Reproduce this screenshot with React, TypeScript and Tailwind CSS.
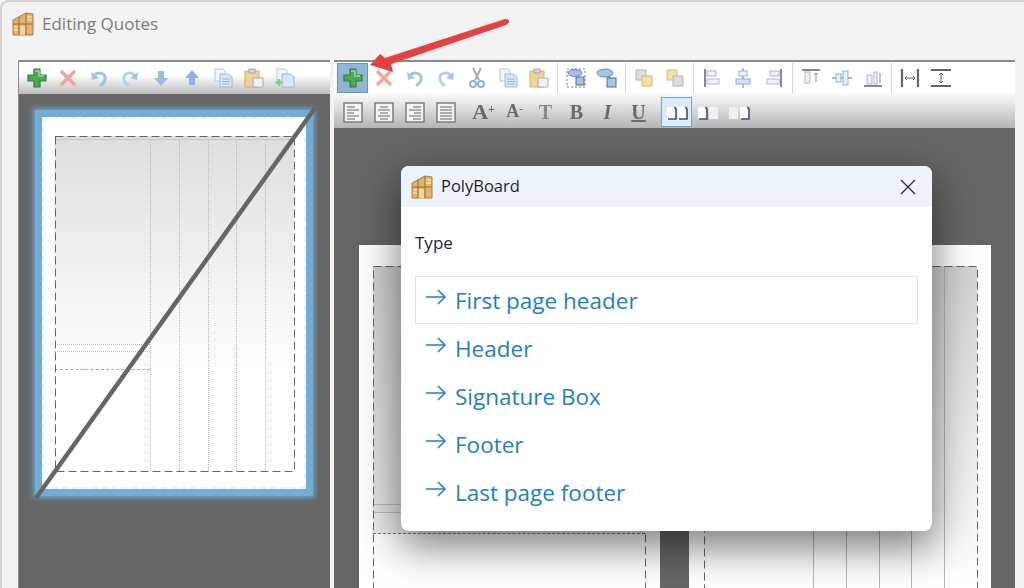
import type { ReactNode } from 'react';

const sans = 'font-["Open_Sans","Noto_Sans",sans-serif]';

function Svg({ children, size = 22 }: { children: ReactNode; size?: number }) {
  return (
    <svg width={size} height={size} viewBox="0 0 22 22" fill="none" className="blur-[0.5px]">
      {children}
    </svg>
  );
}

// Drawn toolbar icons
const Plus = () => (
  <Svg>
    <path d="M8 2h6v6h6v6h-6v6H8v-6H2V8h6z" fill="#4fa84f" stroke="#2f7f3a" strokeWidth="1.2" strokeLinejoin="round" />
    <path d="M9 4h4v5h5" stroke="#9bdc8f" strokeWidth="1.5" />
  </Svg>
);
const Cross = () => (
  <Svg>
    <path d="M5 5l12 12M17 5L5 17" stroke="#f3a399" strokeWidth="3.4" strokeLinecap="round" />
  </Svg>
);
const Undo = () => (
  <Svg>
    <path d="M6 9c3-4 10-4 11 1 .6 3-1 6-4 8" stroke="#a4c2ea" strokeWidth="3" strokeLinecap="round" />
    <path d="M3 5l1 8 7-2z" fill="#a4c2ea" />
  </Svg>
);
const Redo = () => (
  <Svg>
    <path d="M16 9c-3-4-10-4-11 1-.6 3 1 6 4 8" stroke="#b5cfec" strokeWidth="3" strokeLinecap="round" />
    <path d="M19 5l-1 8-7-2z" fill="#a4c2ea" />
  </Svg>
);
const Down = () => (
  <Svg>
    <path d="M8 4h6v7h4l-7 8-7-8h4z" fill="#9dbce8" />
  </Svg>
);
const Up = () => (
  <Svg>
    <path d="M8 18h6v-7h4l-7-8-7 8h4z" fill="#8fb3e6" />
  </Svg>
);
const Copy = () => (
  <Svg>
    <path d="M3 2h8l2 2v10H3z" fill="#f2f5fb" stroke="#b9c8de" />
    <path d="M8 7h8l4 3v10H8z" fill="#dbe5f5" stroke="#a2b6d4" />
    <path d="M10 12h8M10 14.500h8M10 17h8" stroke="#9db2d2" />
  </Svg>
);
const Paste = () => (
  <Svg>
    <path d="M2 4h14v16H2z" fill="#efd594" stroke="#cdb06c" />
    <path d="M6 2h6v4H6z" fill="#d8d8d8" stroke="#a5a5a5" />
    <path d="M10 11h10v9H10z" fill="#eef1f6" stroke="#a5b0c0" />
  </Svg>
);
const PasteAdd = () => (
  <Svg>
    <path d="M3 2h8l2 2v10H3z" fill="#f2f5fb" stroke="#b9c8de" />
    <path d="M8 7h8l4 3v10H8z" fill="#dbe5f5" stroke="#a2b6d4" />
    <path d="M5 12v7M1.500 15.500h7" stroke="#8cc68c" strokeWidth="2.4" />
  </Svg>
);
const Scissors = () => (
  <Svg>
    <path d="M7 1l6 12M15 1L9 13" stroke="#a5adb6" strokeWidth="2" />
    <circle cx="7" cy="17" r="3" stroke="#8fadde" strokeWidth="2" />
    <circle cx="15" cy="17" r="3" stroke="#8fadde" strokeWidth="2" />
  </Svg>
);
const SelectShape = () => (
  <Svg>
    <rect x="2" y="2" width="18" height="18" stroke="#777" strokeDasharray="2 2" />
    <ellipse cx="10" cy="6" rx="7" ry="3.500" fill="#a4c0ea" stroke="#6f88b5" />
    <rect x="11" y="10" width="8" height="8" fill="#a4c0ea" stroke="#566c92" />
  </Svg>
);
const Shape = () => (
  <Svg>
    <ellipse cx="9" cy="6" rx="8" ry="4" fill="#a9c4ec" stroke="#6f88b5" />
    <path d="M12 10h2v2" stroke="#777" />
    <rect x="11" y="11" width="9" height="9" fill="#a9c4ec" stroke="#566c92" />
  </Svg>
);
const Order = ({ back }: { back?: boolean }) => (
  <Svg>
    <rect x="3" y="3" width="10" height="10" fill={back ? '#f3e0a6' : '#dcdcdc'} stroke={back ? '#d2b878' : '#b8b8b8'} />
    <rect x="9" y="9" width="10" height="10" fill={back ? '#dcdcdc' : '#f3e0a6'} stroke={back ? '#b8b8b8' : '#d2b878'} />
  </Svg>
);
const AlignLeft = () => (
  <Svg>
    <path d="M4 2v18" stroke="#8a8a8a" strokeWidth="2" />
    <rect x="6" y="4" width="9" height="5" fill="#eef2f8" stroke="#b0bac8" />
    <rect x="6" y="12" width="12" height="5" fill="#eef2f8" stroke="#b0bac8" />
  </Svg>
);
const AlignCenter = () => (
  <Svg>
    <path d="M11 1v20" stroke="#8a8a8a" strokeWidth="1.2" />
    <rect x="7" y="4" width="8" height="5" fill="#eef2f8" stroke="#9db4d6" />
    <rect x="4" y="12" width="14" height="5" fill="#d4e1f3" stroke="#8fadde" />
  </Svg>
);
const AlignRight = () => (
  <Svg>
    <path d="M18 2v18" stroke="#8a8a8a" strokeWidth="2" />
    <rect x="7" y="4" width="9" height="5" fill="#eef2f8" stroke="#b0bac8" />
    <rect x="4" y="12" width="12" height="5" fill="#eef2f8" stroke="#b0bac8" />
  </Svg>
);
const AlignTop = () => (
  <Svg>
    <path d="M2 3h18" stroke="#8a8a8a" strokeWidth="2" />
    <rect x="5" y="5" width="5" height="11" fill="#eef2f8" stroke="#b0bac8" />
    <path d="M16 15V6M14 8l2-2 2 2" stroke="#8a8a8a" />
  </Svg>
);
const AlignMiddle = () => (
  <Svg>
    <path d="M1 11h20" stroke="#8a8a8a" strokeWidth="1.2" />
    <rect x="5" y="7" width="5" height="8" fill="#eef2f8" stroke="#8fadde" />
    <rect x="12" y="4" width="5" height="14" fill="#eef2f8" stroke="#8fadde" />
  </Svg>
);
const AlignBottom = () => (
  <Svg>
    <path d="M2 19h18" stroke="#8a8a8a" strokeWidth="2" />
    <rect x="5" y="8" width="5" height="9" fill="#eef2f8" stroke="#b0bac8" />
    <rect x="12" y="5" width="3" height="12" fill="#eef2f8" stroke="#b0bac8" />
    <path d="M18 6v10" stroke="#8a8a8a" />
  </Svg>
);
const SpaceH = () => (
  <Svg>
    <path d="M3 2v18M19 2v18" stroke="#666" strokeWidth="2.2" />
    <path d="M6 11h10M8 9l-2 2 2 2M14 9l2 2-2 2" stroke="#666" />
  </Svg>
);
const SpaceV = () => (
  <Svg>
    <path d="M1 3h20M1 19h20" stroke="#666" strokeWidth="2.2" />
    <path d="M11 6v10M9 8l2-2 2 2M9 14l2 2 2-2" stroke="#666" />
  </Svg>
);
const TextAlign = ({ kind }: { kind: 'l' | 'c' | 'r' | 'j' }) => {
  const lines = {
    l: 'M5 6h8M5 9h12M5 12h7M5 15h12M5 18h8',
    c: 'M7 6h8M5 9h12M7 12h8M5 15h12M7 18h8',
    r: 'M9 6h8M5 9h12M10 12h7M5 15h12M9 18h8',
    j: 'M5 6h12M5 9h12M5 12h12M5 15h12M5 18h12',
  }[kind];
  return (
    <Svg>
      <rect x="2" y="2" width="18" height="19" fill="#f4f4f4" stroke="#777" strokeWidth="1.4" />
      <path d={lines} stroke="#666" />
    </Svg>
  );
};
const Pages = ({ left, right }: { left: boolean; right: boolean }) => (
  <Svg>
    <path d="M1 6h8l1 2v10H1z" fill={left ? '#fff' : '#f0f0f0'} />
    <path d="M12 6h8l1 2v10h-9z" fill={right ? '#fff' : '#f0f0f0'} />
    {left && <path d="M8.500 6l1.500 2v10H2" stroke="#3a4f78" strokeWidth="1.6" />}
    {right && <path d="M19.500 6l1.500 2v10h-8" stroke="#3a4f78" strokeWidth="1.6" />}
  </Svg>
);

function Logo({ size = 22 }: { size?: number }) {
  return (
    <svg width={size} height={size + 2} viewBox="0 0 22 24" className="shrink-0">
      <path d="M1 8L14 1l7 1v21H1z" fill="#e3b46e" stroke="#b5813f" strokeWidth="1" />
      <path d="M1 12h20M7 12v11M14 12v11M14 1v11M7 5v7" stroke="#8b6534" strokeWidth="0.9" />
      <path d="M8 14h5v9H8z" fill="#f4d79c" />
      <path d="M2 15h4M2 18h4M15 5h5M15 8h5" stroke="#fff1d0" strokeWidth="1" />
    </svg>
  );
}

function Slot({ children, w = 'w-[31px]' }: { children: ReactNode; w?: string }) {
  return <div className={`flex h-[30px] ${w} shrink-0 items-center justify-center`}>{children}</div>;
}
const Sep = () => (
  <div className="flex h-[30px] w-[6px] shrink-0 justify-center">
    <div className="h-full w-px bg-[#d6d6d6]" />
  </div>
);

function Letter({ children, className }: { children: ReactNode; className: string }) {
  return (
    <Slot>
      <span className={`font-["Liberation_Serif",serif] font-bold text-[#6a6a6a] blur-[0.5px] ${className}`}>{children}</span>
    </Slot>
  );
}

// long dash page margin, css dashed borders are too short here
function DashFrame({ dash = '8 4', color = '#666' }: { dash?: string; color?: string }) {
  return (
    <svg className="absolute inset-0 h-full w-full overflow-visible">
      <rect x="0.5" y="0.5" width="100%" height="100%" fill="none" stroke={color} strokeDasharray={dash} />
    </svg>
  );
}

function LeftPage() {
  return (
    <div className="h-[386px] w-[278px] bg-[#73add4] p-[7px] shadow-[0_0_5px_2px_#6fa3c6]">
      <div className="h-full w-full border-2 border-dashed border-[#e8f4fb] bg-white pb-[17px] pl-[11px] pr-[10px] pt-[17px]">
        <div className="relative flex h-[335px] flex-col bg-gradient-to-b from-[#dedede] to-white to-70%">
          <div className="h-[4px] shrink-0 border-b border-[#c8c8c8]" />
          <div className="flex flex-1">
            <div className="flex w-[95px] shrink-0 flex-col">
              <div className="h-[205px] border-b border-dotted border-[#bdbdbd]" />
              <div className="h-[7px] border-b border-dotted border-[#bdbdbd]" />
              <div className="h-[18px] border-b border-dashed border-[#aaa]" />
            </div>
            {[0, 1, 2, 3, 4].map(i => (
              <div key={i} className="flex-1 border-l border-dotted border-[#b5b5b5]" />
            ))}
          </div>
          <DashFrame />
        </div>
      </div>
    </div>
  );
}

function FirstRightPage() {
  return (
    <div className="h-[380px] w-[301px] shrink-0 bg-white pb-0 pl-[14px] pr-[15px] pt-[21px]">
      <div className="relative flex h-[400px] flex-col">
        <div className="h-[239px] border-b border-[#bbb] bg-gradient-to-b from-[#cfcfcf] to-[#e4e4e4]" />
        <div className="h-[8px] border-b border-[#bbb] bg-[#e4e4e4]" />
        <div className="h-[21px] border-b border-dashed border-[#777] bg-[#ececec]" />
        <DashFrame />
      </div>
    </div>
  );
}

function SecondRightPage() {
  return (
    <div className="h-[380px] w-[302px] shrink-0 bg-white pl-[15px] pr-[14px] pt-[21px]">
      <div className="relative flex h-[400px] bg-gradient-to-b from-[#d2d2d2] to-white to-80%">
        <div className="w-[109px] shrink-0" />
        {[0, 1, 2, 3, 4].map(i => (
          <div key={i} className="flex-1 border-l border-[#b5b5b5]" />
        ))}
        <DashFrame />
      </div>
    </div>
  );
}

const options = ['First page header', 'Header', 'Signature Box', 'Footer', 'Last page footer'];

export default function App() {
  return (
    <div className={`relative h-[588px] w-[1024px] overflow-hidden rounded-tl-lg border-l-2 border-t-2 border-[#d4d4d4] bg-[#f3f3f3] ${sans}`}>
      {/* Window title */}
      <div className="flex h-[44px] items-center gap-[8px] pl-[10px]">
        <Logo />
        <span className="text-[17px] text-[#7c7c7c]">Editing Quotes</span>
      </div>

      <div className="mt-[14px] flex h-[528px] pl-[16px]">
        {/* Left panel */}
        <div className="flex w-[312px] flex-col border-l border-t-2 border-[#8a8a8a]">
          <div className="flex h-[32px] items-center bg-gradient-to-b from-white from-40% to-[#bdbdbd] pl-[2px]">
            <Slot><Plus /></Slot>
            <Slot><Cross /></Slot>
            <Slot><Undo /></Slot>
            <Slot><Redo /></Slot>
            <Slot><Down /></Slot>
            <Slot><Up /></Slot>
            <Slot><Copy /></Slot>
            <Slot><Paste /></Slot>
            <Slot><PasteAdd /></Slot>
          </div>
          <div className="flex-1 bg-[#666666] pl-[16px] pt-[16px]">
            <LeftPage />
          </div>
        </div>

        {/* Right panel */}
        <div className="ml-[4px] flex w-[681px] flex-col border-t-2 border-[#8a8a8a]">
          <div className="flex h-[66px] flex-col bg-gradient-to-b from-white from-45% to-[#b5b5b5] pl-[3px]">
            <div className="flex h-[32px] items-center">
              <div className="flex h-[30px] w-[31px] shrink-0 items-center justify-center border border-[#6d92b4] bg-[#8fb6d6]">
                <Plus />
              </div>
              <Slot><Cross /></Slot>
              <Slot><Undo /></Slot>
              <Slot><Redo /></Slot>
              <Slot><Scissors /></Slot>
              <Slot><Copy /></Slot>
              <Slot><Paste /></Slot>
              <Sep />
              <Slot><SelectShape /></Slot>
              <Slot><Shape /></Slot>
              <Sep />
              <Slot><Order /></Slot>
              <Slot><Order back /></Slot>
              <Sep />
              <Slot><AlignLeft /></Slot>
              <Slot><AlignCenter /></Slot>
              <Slot><AlignRight /></Slot>
              <Sep />
              <Slot><AlignTop /></Slot>
              <Slot><AlignMiddle /></Slot>
              <Slot><AlignBottom /></Slot>
              <Sep />
              <Slot><SpaceH /></Slot>
              <Slot><SpaceV /></Slot>
            </div>
            <div className="flex h-[32px] items-center pt-[3px]">
              <Slot><TextAlign kind="l" /></Slot>
              <Slot><TextAlign kind="c" /></Slot>
              <Slot><TextAlign kind="r" /></Slot>
              <Slot><TextAlign kind="j" /></Slot>
              <div className="w-[7px] shrink-0" />
              <Letter className="text-[22px]">A<sup className="text-[12px]">+</sup></Letter>
              <Letter className="text-[18px]">A<sup className="text-[11px]">-</sup></Letter>
              <Letter className="text-[20px] text-[#8a8a8a]">T</Letter>
              <Letter className="text-[20px]">B</Letter>
              <Letter className="text-[20px] italic">I</Letter>
              <Letter className="text-[20px] underline">U</Letter>
              <div className="w-[7px] shrink-0" />
              <div className="flex h-[30px] w-[31px] shrink-0 items-center justify-center border border-[#6fa5cf] bg-[#d9edf9]">
                <Pages left right />
              </div>
              <Slot><Pages left right={false} /></Slot>
              <Slot><Pages left={false} right /></Slot>
            </div>
          </div>
          <div className="flex flex-1 gap-[29px] overflow-hidden bg-[#666666] pl-[25px] pt-[117px]">
            <FirstRightPage />
            <SecondRightPage />
          </div>
        </div>
      </div>

      {/* Dialog */}
      <div className="absolute left-[399px] top-[164px] flex h-[365px] w-[531px] flex-col overflow-hidden rounded-lg bg-white shadow-[0_14px_40px_2px_rgba(0,0,0,0.5)]">
        <div className="flex h-[41px] items-center bg-[#eef3fa] pl-[10px] pr-[16px]">
          <Logo />
          <span className="ml-[8px] text-[16.5px] text-[#1f1f1f]">PolyBoard</span>
          <svg width="16" height="16" viewBox="0 0 16 16" className="ml-auto">
            <path d="M1 1l14 14M15 1L1 15" stroke="#333" strokeWidth="1.4" />
          </svg>
        </div>
        <div className="flex flex-col px-[14px]">
          <div className="pb-[22px] pt-[25px] text-[17px] leading-[22px] text-[#262626]">Type</div>
          {options.map((label, i) => (
            <div
              key={label}
              className={`flex h-[48px] items-center gap-[8px] border pl-[9px] ${i === 0 ? 'border-[#d5e8f1]' : 'border-transparent'}`}
            >
              <svg width="22" height="18" viewBox="0 0 22 18" className="-mt-[6px]">
                <path d="M1 9h19M13 2l7 7-7 7" fill="none" stroke="#1f80c8" strokeWidth="1.500" />
              </svg>
              <span className="pt-[2px] text-[22.5px] text-[#1f7fc4]">{label}</span>
            </div>
          ))}
        </div>
      </div>

      {/* Diagonal strike across the left page */}
      <svg width="290" height="400" viewBox="0 0 290 400" className="absolute left-[28px] top-[102px]">
        <path d="M6 394L285 4" stroke="#666666" strokeWidth="4.500" />
      </svg>

      {/* Red callout arrow */}
      <svg width="160" height="70" viewBox="0 0 160 70" className="absolute left-[358px] top-[8px] blur-[0.4px]">
        <path d="M145 9Q150 9 149 12Q148 14 146 15L31 54L33 62L10 55L20 44L25 48Z" fill="#e8403f" />
      </svg>
    </div>
  );
}
